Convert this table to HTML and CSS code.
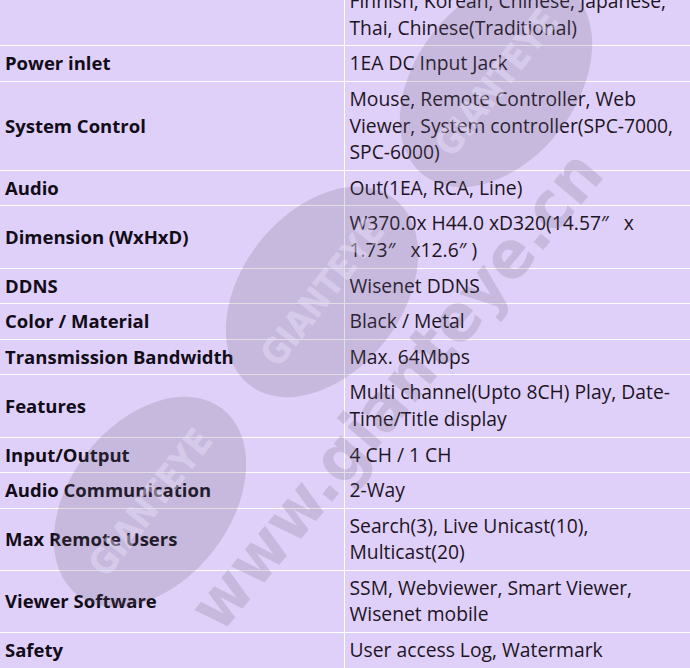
FILE: index.html
```html
<!DOCTYPE html>
<html lang="en">
<head>
    <meta charset="UTF-8">
    <meta name="viewport" content="width=device-width, initial-scale=1.0">
    <title>Specification</title>
    <link rel="stylesheet" href="styles.css">
</head>
<body>

    <div class="spec-wrap">
        <table class="spec">
            <colgroup>
                <col class="col-label">
                <col class="col-value">
            </colgroup>
            <tr>
                <td class="label">Language</td>
                <td>English, French, German, Spanish,<br>Italian, Russian, Swedish, Danish,<br>Finnish, Korean, Chinese, Japanese,<br>Thai, Chinese(Traditional)</td>
            </tr>
            <tr>
                <td class="label">Power inlet</td>
                <td>1EA DC Input Jack</td>
            </tr>
            <tr>
                <td class="label">System Control</td>
                <td>Mouse, Remote Controller, Web Viewer, System <span class="nowrap">controller(SPC-7000,</span> SPC-6000)</td>
            </tr>
            <tr>
                <td class="label">Audio</td>
                <td>Out(1EA, RCA, Line)</td>
            </tr>
            <tr>
                <td class="label">Dimension (WxHxD)</td>
                <td>W370.0x H44.0 xD320(14.57″&nbsp;&nbsp; x 1.73″&nbsp;&nbsp; x12.6″ )</td>
            </tr>
            <tr>
                <td class="label">DDNS</td>
                <td>Wisenet DDNS</td>
            </tr>
            <tr>
                <td class="label">Color / Material</td>
                <td>Black / Metal</td>
            </tr>
            <tr>
                <td class="label">Transmission Bandwidth</td>
                <td>Max. 64Mbps</td>
            </tr>
            <tr>
                <td class="label">Features</td>
                <td>Multi channel(Upto 8CH) Play, Date-Time/Title display</td>
            </tr>
            <tr>
                <td class="label">Input/Output</td>
                <td>4 CH / 1 CH</td>
            </tr>
            <tr>
                <td class="label">Audio Communication</td>
                <td>2-Way</td>
            </tr>
            <tr>
                <td class="label">Max Remote Users</td>
                <td>Search(3), Live Unicast(10), Multicast(20)</td>
            </tr>
            <tr>
                <td class="label">Viewer Software</td>
                <td>SSM, Webviewer, Smart Viewer, Wisenet mobile</td>
            </tr>
            <tr>
                <td class="label">Safety</td>
                <td>User access Log, Watermark</td>
            </tr>
        </table>
    </div>

    <!-- watermark over the picture -->
    <svg class="watermark" width="690" height="668" viewBox="0 0 690 668">
        <g class="wm-badge" transform="rotate(-52 150 502)">
            <ellipse cx="150" cy="502" rx="118" ry="80"/>
            <text x="150" y="515" textLength="175" lengthAdjust="spacingAndGlyphs">GIANTEYE</text>
        </g>
        <g class="wm-badge" transform="rotate(-52 322 292)">
            <ellipse cx="322" cy="292" rx="118" ry="80"/>
            <text x="322" y="305" textLength="175" lengthAdjust="spacingAndGlyphs">GIANTEYE</text>
        </g>
        <g class="wm-badge" transform="rotate(-52 496 82)">
            <ellipse cx="496" cy="82" rx="118" ry="80"/>
            <text x="496" y="95" textLength="175" lengthAdjust="spacingAndGlyphs">GIANTEYE</text>
        </g>
        <text class="wm-url" x="398" y="412" textLength="600" lengthAdjust="spacingAndGlyphs" transform="rotate(-50 398 392)">www.gianteye.cn</text>
    </svg>

</body>
</html>
```

FILE: styles.css
```css
body {
    margin: 0;
    padding: 0;
    background: #dfd0f9;
    font-family: 'Open Sans', 'Noto Sans', sans-serif;
    color: #1d1424;
    overflow: hidden;
    position: relative;
    height: 668px;
}

.spec-wrap {
    height: 668px;
    overflow: hidden;
}

.spec {
    border-collapse: collapse;
    table-layout: fixed;
    width: 710px;
    margin-top: -70px; /* page is scrolled past the top of the table */
    font-size: 19.3px;
    line-height: 26.6px;
}

.col-label {
    width: 344px;
}

.spec td {
    border: 1px solid #fff;
    padding: 4px 30px 4px 5px;
    vertical-align: middle;
}

.spec td:first-child {
    border-left: none;
    padding-right: 5px;
}

.spec .label {
    font-size: 18.5px;
    font-weight: 700;
    color: #120c18;
}

.nowrap {
    white-space: nowrap;
}

/* Wasserzeichen */
.watermark {
    position: absolute;
    top: 0;
    left: 0;
    pointer-events: none;
}

.wm-badge ellipse {
    fill: rgba(105, 95, 115, 0.2);
}

.wm-badge text {
    font-family: 'DejaVu Sans Condensed', 'DejaVu Sans', sans-serif;
    font-weight: 700;
    font-size: 36px;
    text-anchor: middle;
    fill: rgba(235, 225, 250, 0.45);
}

.wm-url {
    font-family: 'DejaVu Sans', sans-serif;
    font-weight: 700;
    font-size: 66px;
    text-anchor: middle;
    fill: rgba(105, 95, 115, 0.2);
}
```
